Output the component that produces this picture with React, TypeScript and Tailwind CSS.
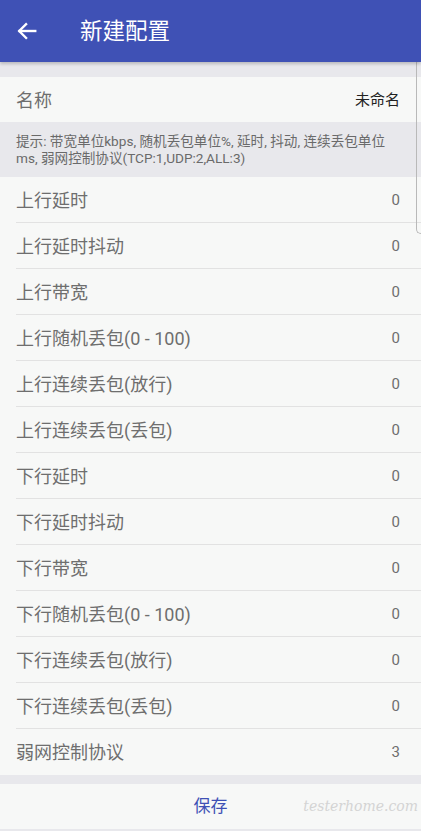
import React from 'react';

const rows: [string, string][] = [
  ['上行延时', '0'],
  ['上行延时抖动', '0'],
  ['上行带宽', '0'],
  ['上行随机丢包(0 - 100)', '0'],
  ['上行连续丢包(放行)', '0'],
  ['上行连续丢包(丢包)', '0'],
  ['下行延时', '0'],
  ['下行延时抖动', '0'],
  ['下行带宽', '0'],
  ['下行随机丢包(0 - 100)', '0'],
  ['下行连续丢包(放行)', '0'],
  ['下行连续丢包(丢包)', '0'],
  ['弱网控制协议', '3'],
];

const font = { fontFamily: 'Roboto, "Noto Sans CJK SC", sans-serif' };

export default function App() {
  return (
    <div className="relative w-[421px] h-[831px] bg-[#e8e8ec] overflow-hidden" style={font}>
      {/* toolbar */}
      <div className="h-[62px] bg-[#3f51b5] flex items-center shadow-[0_2px_3px_rgba(0,0,0,0.2)] relative z-10">
        <svg className="ml-[16px]" width="22" height="22" viewBox="0 0 24 24" fill="none" stroke="white" strokeWidth="2.6" strokeLinecap="square">
          <path d="M21 12H4" />
          <path d="M11 4.5L3.5 12l7.5 7.5" />
        </svg>
        <span className="ml-[42px] text-[22.5px] text-white leading-none">新建配置</span>
      </div>

      <div className="h-[15px]" />

      <div className="h-[45px] bg-[#f7f8f7] flex items-center justify-between pl-[16px] pr-[21px] pt-[1px]">
        <span className="text-[18px] text-[#6e6e6e]">名称</span>
        <span className="text-[15px] text-[#222]">未命名</span>
      </div>

      <div className="h-[55px] px-[16px] flex flex-col justify-center text-[13.6px] leading-[17px] text-[#6a6a6a]">
        <div>提示: 带宽单位kbps, 随机丢包单位%, 延时, 抖动, 连续丢包单位</div>
        <div>ms, 弱网控制协议(TCP:1,UDP:2,ALL:3)</div>
      </div>

      <div className="bg-[#f7f8f7]">
        {rows.map(([label, value], i) => (
          <div key={label} className="pl-[16px]">
            <div
              className={`h-[46px] flex items-center justify-between pr-[21px] pt-[1px] ${
                i < rows.length - 1 ? 'border-b border-[#e2e2e2]' : ''
              }`}
            >
              <span className="text-[18px] text-[#6e6e6e]">{label}</span>
              <span className="text-[15px] text-[#6e6e6e]">{value}</span>
            </div>
          </div>
        ))}
      </div>

      <div className="h-[9px]" />

      <div className="h-[45px] bg-[#f7f8f7] flex items-center justify-center relative">
        <span className="text-[17px] text-[#3f51b5]">保存</span>
        <span
          className="absolute right-[3px] top-[12px] text-[14px] text-[#d4d4d4]"
          style={{ fontFamily: '"DejaVu Serif", serif', fontStyle: 'italic' }}
        >
          testerhome.com
        </span>
      </div>

      {/* floating window edge */}
      <div className="absolute right-0 top-[58px] w-[5px] h-[176px] border-l border-b border-[#b9b9b9] rounded-bl-[5px] rounded-tl-[5px]" />
    </div>
  );
}
